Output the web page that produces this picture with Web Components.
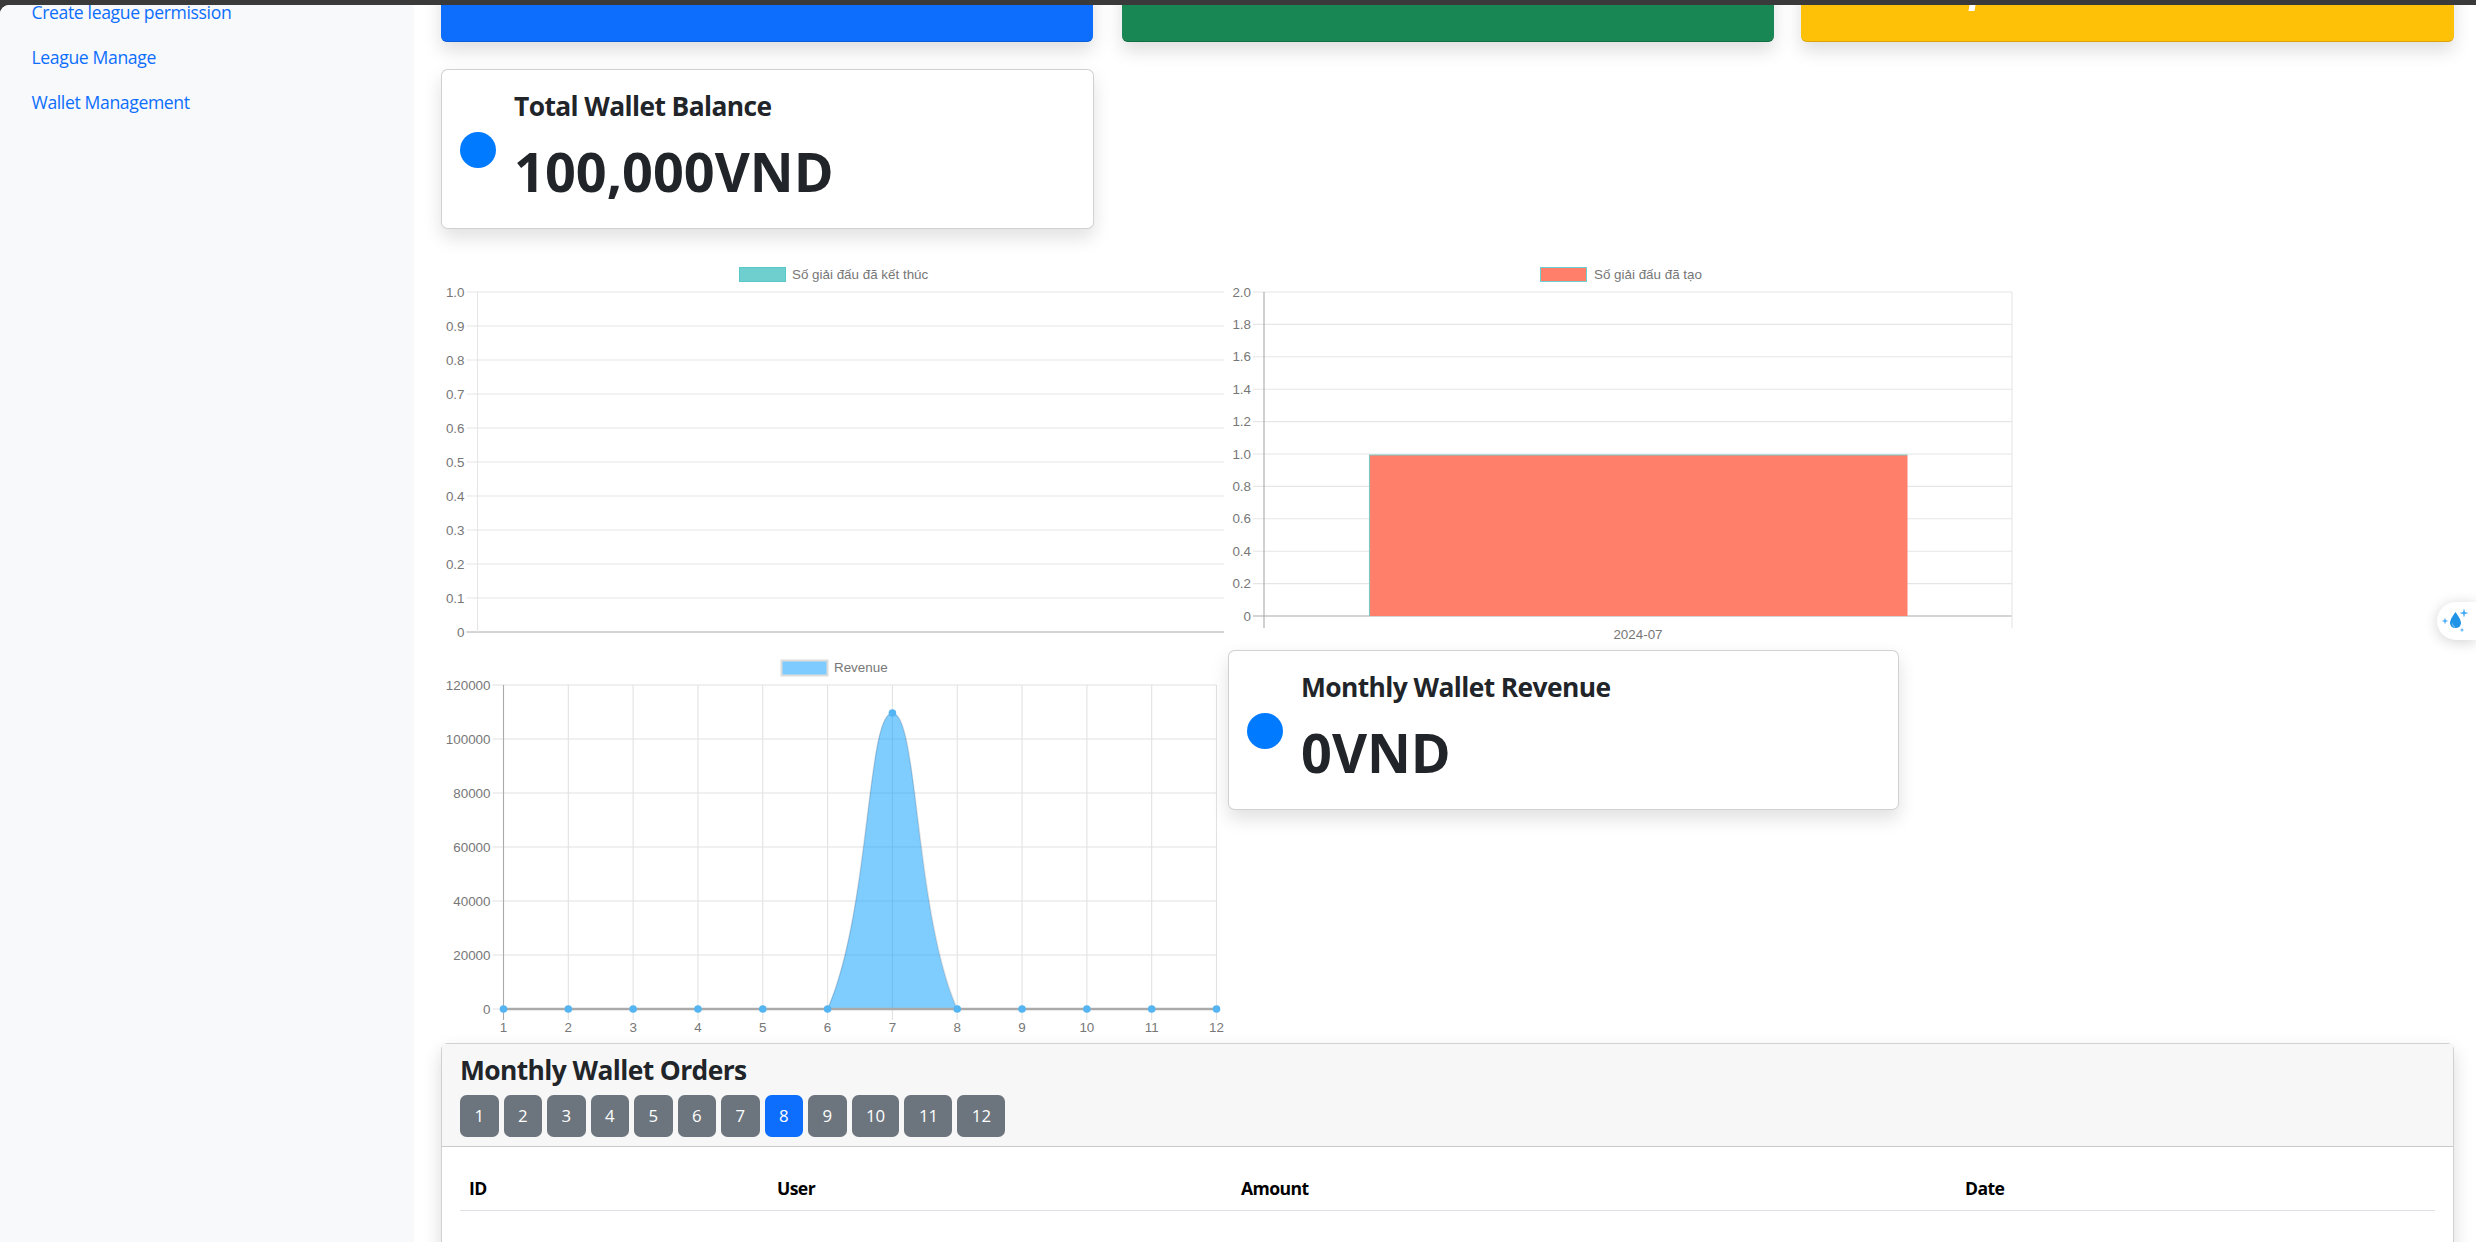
<!DOCTYPE html>
<html><head><meta charset="utf-8"><style>
html,body{margin:0;height:1242px;overflow:hidden;background:#3a3a3a;font-family:"Open Sans","Noto Sans",sans-serif}
</style></head><body>
<app-shell>
<side-bar slot="side"><nav-link>Create league permission</nav-link><nav-link>League Manage</nav-link><nav-link>Wallet Management</nav-link></side-bar>
<top-row><stat-tile color="#0d6efd" edge="#0b5ed7"></stat-tile><stat-tile color="#198754" edge="#146c43"></stat-tile><stat-tile color="#ffc107" edge="#d9a406" mark="," style="margin-left:-2px"></stat-tile></top-row>
<wallet-card title="Total Wallet Balance" value="100,000VND" style="width:653px;margin-top:27px"></wallet-card>
<chart-row style="margin-top:30px">
<bar-chart kind="empty"></bar-chart><bar-chart kind="bar"></bar-chart>
</chart-row>
<chart-row style="margin-top:5px;height:393px">
<line-chart></line-chart>
<wallet-card title="Monthly Wallet Revenue" value="0VND" style="width:671px;margin-left:3px;align-self:flex-start"></wallet-card>
</chart-row>
<orders-card></orders-card>
</app-shell>
<water-pill></water-pill>
<script>
const make=(name,css,html)=>{customElements.define(name,class extends HTMLElement{connectedCallback(){if(this.shadowRoot)return;const r=this.attachShadow({mode:'open'});r.innerHTML='<style>'+css+'</style>'+(typeof html==='function'?html(this):html);}});};
const SANS='"Liberation Sans",Arial,sans-serif';
make('app-shell',`:host{display:flex;height:1237px;margin-top:5px;background:#fff;border-top-left-radius:9px;overflow:hidden}
.s{flex:0 0 414px;background:#f8f9fa;overflow:hidden}.m{flex:1;min-width:0;padding:0 22px 0 27px;overflow:hidden;display:flex;flex-direction:column}`,
`<div class="s"><slot name="side"></slot></div><div class="m"><slot></slot></div>`);
make('side-bar',`:host{display:flex;flex-direction:column;margin-top:-15px;padding-left:31.5px}`,`<slot></slot>`);
make('nav-link',`:host{display:block;height:45px;line-height:45px;color:#0d6efd;font-size:17.6px;letter-spacing:-.37px;white-space:nowrap}`,`<slot></slot>`);
make('top-row',`:host{display:grid;grid-template-columns:652px 652px 651px;gap:29px;height:37px;flex:none}`,`<slot></slot>`);
make('stat-tile',`:host{display:block;height:37px;position:relative}
.c{position:absolute;left:0;right:0;bottom:0;height:200px;border-radius:0 0 6px 6px;box-shadow:0 9px 18px rgba(0,0,0,.13);box-sizing:border-box}
.g{position:absolute;left:168px;top:0;width:6px;height:6px;background:#fff;transform:skewX(-10deg)}`,
t=>`<div class="c" style="background:${t.getAttribute('color')};border-bottom:1px solid ${t.getAttribute('edge')}"></div>${t.getAttribute('mark')?'<div class="g"></div>':''}`);
make('wallet-card',`:host{display:flex;flex:none;box-sizing:border-box;height:160px;align-items:center;background:#fff;border:1px solid rgba(0,0,0,.18);border-radius:6.6px;box-shadow:0 8.8px 17.6px rgba(0,0,0,.12);padding:0 18px;color:#212529}
.d{width:36px;height:36px;border-radius:50%;background:#007bff;flex:none;margin-right:18px;position:relative;top:.5px}
.w{padding-bottom:7px}
h4{margin:0;font-size:26.4px;font-weight:700;letter-spacing:-.6px;line-height:32px}
p{margin:18px 0 0;font-size:54px;font-weight:700;line-height:62px}`,
t=>`<div class="d"></div><div class="w"><h4>${t.getAttribute('title')}</h4><p>${t.getAttribute('value')}</p></div>`);
make('chart-row',`:host{display:flex;flex:none;position:relative}`,`<slot></slot>`);
const tx=(x,y,s,a='middle')=>`<text x="${x}" y="${y}" text-anchor="${a}" dominant-baseline="central">${s}</text>`;
const ln=(x1,y1,x2,y2,c)=>`<line x1="${x1}" y1="${y1}" x2="${x2}" y2="${y2}" stroke="${c}" stroke-width="1.1"/>`;
const G='#e6e6e6';
make('bar-chart',`:host{display:block;flex:none;height:386px}svg{display:block;font:13.4px ${SANS};fill:#777}`,t=>{
 const bar=t.getAttribute('kind')==='bar';let s='';
 if(!bar){t.style.width='784px';
  s+=`<rect x="298.5" y="8.5" width="46" height="14" fill="#6fcfcf" stroke="#58c8c8"/>`+tx(351,15,'Số giải đấu đã kết thúc','start');
  const L=36.5,T=33,B=373,R=783;
  for(let i=0;i<=10;i++){const y=T+(B-T)*i/10;s+=ln(L-11,y,R,y,i==10?'#aaa':G)+tx(L-13,y,i==10?'0':((10-i)/10).toFixed(1),'end');}
  s+=ln(L,T,L,B,G);
  return `<svg width="784" height="386">${s}</svg>`;}
 t.style.width='790px';
 s+=`<rect x="315.5" y="8.5" width="46" height="14" fill="#ff7f6b" stroke="#6fcfcf"/>`+tx(369,15,'Số giải đấu đã tạo','start');
 const L=39,T=33,B=357,R=787;
 for(let i=0;i<=10;i++){const y=T+(B-T)*i/10;s+=ln(L-11,y,R,y,i==10?'#aaa':G)+tx(L-13,y,i==10?'0':((20-2*i)/10).toFixed(1),'end');}
 s+=`<rect x="144.5" y="196" width="538" height="161" fill="#ff7f6b"/><path d="M144.5 357V196H682.500" fill="none" stroke="#7cc8c0" stroke-width="1.1"/>`;
 s+=ln(L,T,L,369,'#aaa')+ln(R,T,R,369,G)+tx(413,375,'2024-07');
 return `<svg width="790" height="386">${s}</svg>`;
});
make('line-chart',`:host{display:block;flex:none;width:784px;height:393px}svg{display:block;font:13.4px ${SANS};fill:#777}`,t=>{
 let s=`<rect x="340.5" y="10.5" width="46" height="15" fill="#7ecbff" stroke="#dcdcdc" stroke-width="2"/>`+tx(393,17,'Revenue','start');
 const L=62.5,R=775.5,T=35,B=359,st=(R-L)/11;let h=`<svg width="784" height="393">`;
 for(let i=0;i<=6;i++){const y=T+54*i;s+=ln(L-11,y,R,y,'#e2e2e2')+tx(L-13,y,String(120000-20000*i),'end');}
 for(let i=0;i<12;i++){const x=L+st*i;s+=ln(x,T,x,B+11,i==0?'#aaa':'#e2e2e2')+tx(x,B+18,String(i+1));}
 const x6=L+5*st,x7=L+6*st,x8=L+7*st,yp=63;
 s+=`<path d="M${x6} ${B}C${x6+43} ${B-98} ${x7-26} ${yp} ${x7} ${yp}C${x7+26} ${yp} ${x8-43} ${B-98} ${x8} ${B}Z" fill="rgba(0,153,255,.5)" stroke="rgba(0,0,0,.12)" stroke-width="1.5"/>`;
 s+=`<line x1="${L}" y1="${B}" x2="${R}" y2="${B}" stroke="#aaa" stroke-width="2.4"/>`;
 for(let i=0;i<12;i++){const x=L+st*i,y=i==6?yp:B;s+=`<circle cx="${x}" cy="${y}" r="3.8" fill="#55b5f2"/>`;}
 return h+s+'</svg>';
});
make('orders-card',`:host{display:block;flex:none;box-sizing:border-box;height:260px;background:#fff;border:1px solid rgba(0,0,0,.18);border-radius:6.6px 6.6px 0 0;box-shadow:0 8.8px 17.6px rgba(0,0,0,.15);color:#212529}
.h{background:#f7f7f7;border-bottom:1px solid rgba(0,0,0,.18);height:103px;box-sizing:border-box;padding:7px 18px 0}
h3{margin:0 0 5px;font-size:26.4px;line-height:39px;font-weight:700;letter-spacing:-.6px;height:39px}
.b{display:flex;gap:5px}
button{all:unset;box-sizing:border-box;height:42px;min-width:38.5px;padding:0 14.4px;background:#6c757d;color:#fff;border-radius:6.6px;font-size:16.8px;line-height:42px;text-align:center}
button.on{background:#0d6efd}
.t{margin:0 18px;display:grid;grid-template-columns:308px 464px 724px 1fr;box-sizing:border-box;height:64px;padding-top:18px;border-bottom:1px solid #dee2e6;align-items:center;font-size:17.6px;font-weight:700;color:#000;letter-spacing:-.6px}
.t span{padding-left:9px}`,
()=>`<div class="h"><h3>Monthly Wallet Orders</h3><div class="b">${[...Array(12)].map((_,i)=>`<button class="${i==7?'on':''}">${i+1}</button>`).join('')}</div></div><div class="t"><span>ID</span><span>User</span><span>Amount</span><span>Date</span></div>`);
make('water-pill',`:host{position:fixed;right:0;top:602px;width:39px;height:38px;background:#fff;border-radius:19px 0 0 19px;box-shadow:0 2px 14px rgba(0,0,0,.18);display:block}svg{display:block}`,
`<svg width="39" height="38" viewBox="0 0 39 38"><path d="M18.500 10C15 15 13 18 13 21.500A5.600 5.600 0 0 0 24 21.500C24 18 22 15 18.500 10Z" fill="#1f93e6"/><path d="M15.500 21.500c0 2 1 3 2.500 3.500" fill="none" stroke="#8fcbf5" stroke-width="1"/><path d="M27 6.500l1 3.500 3.500 1-3.500 1-1 3.500-1-3.500-3.500-1 3.500-1ZM8 15.500l.8 2.700 2.700.8-2.700.8-.8 2.700-.8-2.700-2.700-.8 2.700-.8ZM25 25.500l.6 1.900 1.900.6-1.900.6-.6 1.900-.6-1.900-1.900-.6 1.900-.6Z" fill="#45aaf5"/></svg>`);
</script>
</body></html>
